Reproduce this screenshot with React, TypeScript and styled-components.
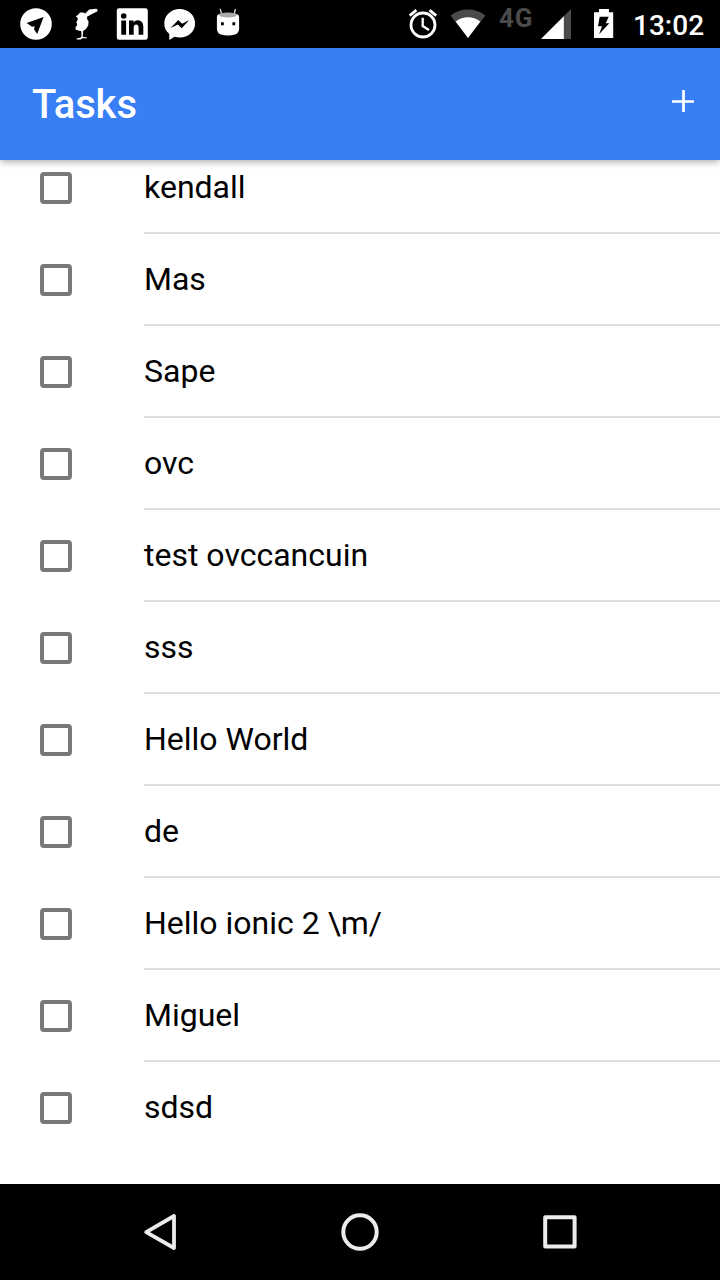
import React from "react";
import styled, { createGlobalStyle } from "styled-components";

const GlobalStyle = createGlobalStyle`
  * { box-sizing: border-box; }
  body { margin: 0; background: #fff; font-family: Roboto, "Noto Sans", sans-serif; }
`;

const Screen = styled.div`
  display: flex;
  flex-direction: column;
  width: 720px;
  height: 1280px;
  overflow: hidden;
  background: #fff;
`;

const StatusBar = styled.div`
  display: flex;
  flex: none;
  justify-content: space-between;
  height: 48px;
  padding: 0 16px 0 20px;
  background: #000;
  color: #fff;
`;

const IconGroup = styled.div<{ $gap: number }>`
  display: flex;
  gap: ${(p) => p.$gap}px;
`;

const StatusIcon = styled.svg`
  display: block;
  flex: none;
  height: 48px;
`;

const Network = styled.span`
  width: 42px;
  color: #4b4b4b;
  font-size: 26px;
  font-weight: 700;
  line-height: 36px;
  letter-spacing: 0.8px;
`;

const Clock = styled.span`
  width: 71px;
  margin-left: 19px;
  font-size: 28px;
  font-weight: 500;
  line-height: 52px;
  white-space: nowrap;
`;

const Header = styled.header`
  position: relative;
  z-index: 1;
  display: flex;
  flex: none;
  align-items: center;
  justify-content: space-between;
  height: 112px;
  padding: 0 26px 0 32px;
  background: #387ef5;
  color: #fff;
  box-shadow: 0 2px 7px rgba(0, 0, 0, 0.32);
`;

const Title = styled.h1`
  margin: 2px 0 0;
  font-size: 40px;
  font-weight: 500;
  line-height: 48px;
  letter-spacing: -0.1px;
`;

const AddButton = styled.button`
  display: flex;
  padding: 0;
  margin-bottom: 6px;
  border: 0;
  background: none;
  color: inherit;
`;

const Content = styled.main`
  flex: 1;
  min-height: 0;
  overflow: hidden;
`;

const List = styled.ul`
  margin: -18px 0 0;
  padding: 0;
  list-style: none;
`;

const Row = styled.li`
  display: flex;
  align-items: center;
  height: 92px;
  padding-left: 40px;
`;

const CheckBox = styled.span`
  flex: none;
  width: 32px;
  height: 32px;
  margin-right: 72px;
  border: 4px solid #787878;
  border-radius: 4px;
`;

const Label = styled.span<{ $last: boolean }>`
  flex: 1;
  height: 92px;
  border-bottom: 2px solid ${(p) => (p.$last ? "transparent" : "#dedede")};
  color: #000;
  font-size: 32px;
  line-height: 91px;
`;

const NavBar = styled.nav`
  display: flex;
  flex: none;
  align-items: center;
  justify-content: center;
  gap: 160px;
  height: 96px;
  background: #000;
`;

const NavIcon = styled.svg`
  width: 40px;
  height: 40px;
  fill: none;
  stroke: #ececec;
  stroke-width: 4;
  stroke-linejoin: round;
`;

const tasks = [
  "kendall",
  "Mas",
  "Sape",
  "ovc",
  "test ovccancuin",
  "sss",
  "Hello World",
  "de",
  "Hello ionic 2 \\m/",
  "Miguel",
  "sdsd",
];

const Notifications = () => (
  <IconGroup $gap={16}>
    <StatusIcon width="32" viewBox="0 0 32 48">
      <circle cx="16" cy="24" r="15.8" fill="#fff" />
      <path d="M6.6 22.9 23.6 17 17.2 34 14 29.2 14.6 26.2 12 26.8Z" fill="#000" />
    </StatusIcon>
    <StatusIcon width="32" viewBox="0 0 32 48" fill="#fff">
      <path d="M28.2 8.7 29.6 9.4 29.2 11.4 24 13.9 19 16.8 19.2 19.2 20.6 21.6 20.2 25.6 18 29 15.2 31 14.7 36.8 19 37.4 19 38.3 14.4 38.3 12.7 39.4 8.4 39.4 8.8 38.4 12.7 37.4 13.4 36.6 13.4 31.2 10.4 30.6 7.8 29.8 7.4 27.6 9.2 25 8.4 22 9.8 19.4 9.4 17.4 7.6 16.3 9.6 15.2 12 12.6 15.4 12.6 17.2 13.4 21.2 9.5Z" />
    </StatusIcon>
    <StatusIcon width="32" viewBox="0 0 32 48">
      <rect x="0.8" y="8.3" width="31" height="31.4" rx="2.3" fill="#fff" />
      <circle cx="7.7" cy="16" r="2.8" fill="#000" />
      <path d="M5.3 20.5h4.8v14.3H5.3zM13 20.5h4.5v2c2.4-3.7 9.8-3.1 9.8 4.2v8.1h-4.7v-7.1c0-4.3-4.9-4.1-4.9-.2v7.3H13z" fill="#000" />
    </StatusIcon>
    <StatusIcon width="32" viewBox="0 0 32 48">
      <path d="M15.7 8.9C7 8.9.3 15.1.3 23.4c0 4.5 1.8 7.8 5 10.5v6l5.2-3.1c1.6.5 3.4.7 5.2.7 8.7 0 15.4-6 15.4-14.1S24.4 8.9 15.7 8.9Z" fill="#fff" />
      <path d="M6.6 28 14.3 20 18.1 23.8 25.2 20 17.7 28.3 13.9 24.6Z" fill="#000" />
    </StatusIcon>
    <StatusIcon width="32" viewBox="0 0 32 48">
      <path d="M8.2 9 9.8 15M23.4 9 22 15" stroke="#ddd" strokeWidth="1.3" />
      <path d="M4.9 17c0-1.8 1.6-3 3.5-3.300h15.200c2 .3 3.500 1.500 3.500 3.300v11.500c0 3-1.400 5.300-4 6-4.700 1.200-9.500 1.200-14.200 0-2.600-.7-4-3-4-6Z" fill="#fff" />
      <ellipse cx="16" cy="15" rx="8.8" ry="2.4" fill="#aaa" />
      <path d="M9 22.3h2.800v2.900H9zM20.400 22.300h2.800v2.900h-2.800z" fill="#000" />
    </StatusIcon>
  </IconGroup>
);

const SystemStatus = () => (
  <IconGroup $gap={0}>
    <StatusIcon width="42" viewBox="408 0 42 48" fill="none" stroke="#fff">
      <circle cx="423" cy="25" r="12" strokeWidth="2.8" />
      <path d="M422.7 17.8V26l6.3 4" strokeWidth="2.3" />
      <path d="M409.7 15.7 416.4 10.2M429.5 10.2 436.2 15.7" strokeWidth="2.8" />
    </StatusIcon>
    <StatusIcon width="49" viewBox="450 0 49 48">
      <path d="M450.5 15.4C461 7.6 475 7.6 485.4 15.4L468 38Z" fill="#4b4b4b" />
      <path d="M455.6 21.6C463 15.8 473 15.8 480.4 21.6L468 38Z" fill="#fff" />
    </StatusIcon>
    <Network>4G</Network>
    <StatusIcon width="53" viewBox="541 0 53 48">
      <path d="M571 9v30h-30Z" fill="#4b4b4b" />
      <path d="M563.8 16.2V39H541Z" fill="#fff" />
    </StatusIcon>
    <StatusIcon width="20" viewBox="594 0 20 48">
      <path d="M599 9h10v3.200h4.200V38H594V12.200h5Z" fill="#fff" />
      <path d="M599.7 16.8h9l-3 6.500h3.600l-10.200 11 2.900-8h-4Z" fill="#000" />
    </StatusIcon>
    <Clock>13:02</Clock>
  </IconGroup>
);

export default function App() {
  return (
    <Screen>
      <GlobalStyle />
      <StatusBar>
        <Notifications />
        <SystemStatus />
      </StatusBar>
      <Header>
        <Title>Tasks</Title>
        <AddButton aria-label="Add task">
          <svg width="22" height="22" viewBox="0 0 22 22">
            <path d="M0 11.5h22M11.5 0v22" stroke="#fff" strokeWidth="2.7" />
          </svg>
        </AddButton>
      </Header>
      <Content>
        <List>
          {tasks.map((task, i) => (
            <Row key={task}>
              <CheckBox />
              <Label $last={i === tasks.length - 1}>{task}</Label>
            </Row>
          ))}
        </List>
      </Content>
      <NavBar>
        <NavIcon viewBox="0 0 40 40">
          <path d="M34 4v32L6.2 20.2Z" strokeWidth="3.8" />
        </NavIcon>
        <NavIcon viewBox="0 0 40 40">
          <circle cx="20" cy="20" r="16.7" />
        </NavIcon>
        <NavIcon viewBox="0 0 40 40">
          <rect x="5.2" y="5.2" width="29.4" height="29.4" />
        </NavIcon>
      </NavBar>
    </Screen>
  );
}
